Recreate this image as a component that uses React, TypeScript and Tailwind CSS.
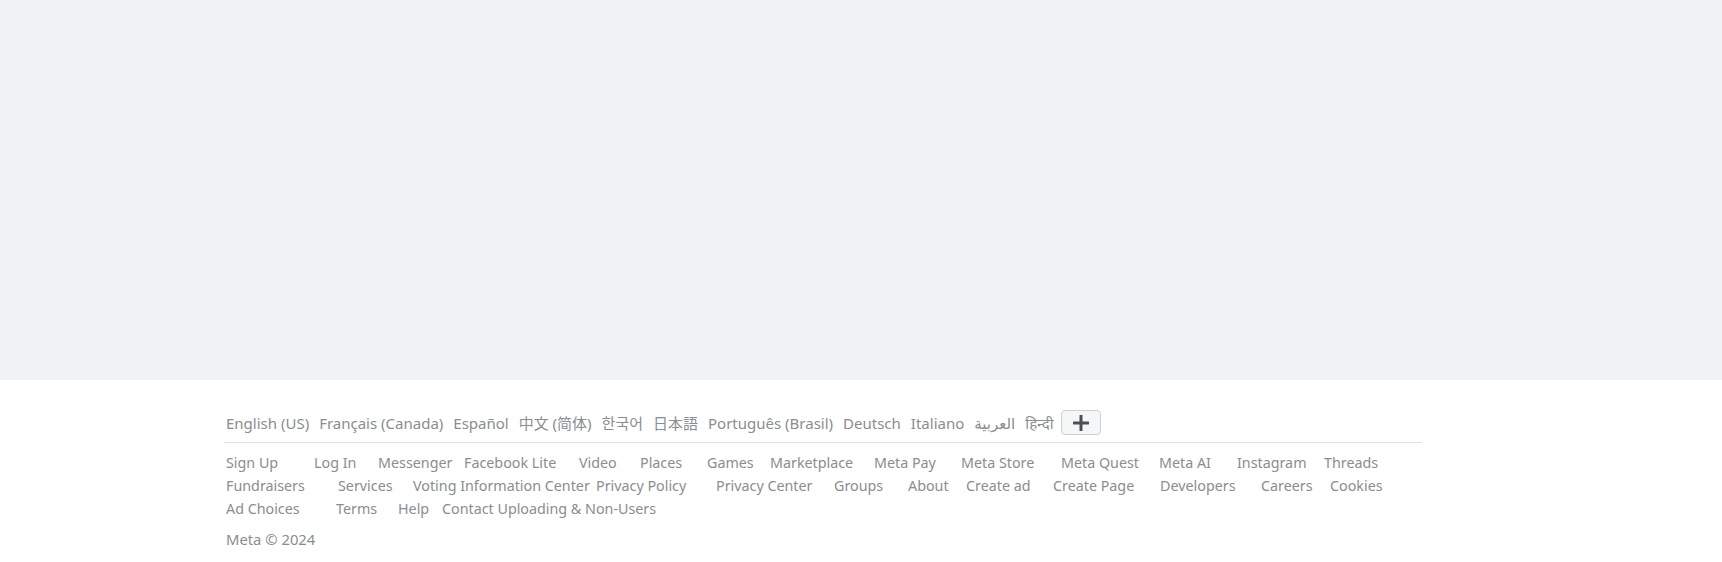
import React from "react";

const languages = [
  "English (US)",
  "Français (Canada)",
  "Español",
  "中文 (简体)",
  "한국어",
  "日本語",
  "Português (Brasil)",
  "Deutsch",
  "Italiano",
  "العربية",
  "हिन्दी",
];

// widths copied from the reference so the uneven spacing lines up
const linkRows: [string, string][][] = [
  [
    ["Sign Up", "w-[88px]"],
    ["Log In", "w-[64px]"],
    ["Messenger", "w-[86px]"],
    ["Facebook Lite", "w-[115px]"],
    ["Video", "w-[61px]"],
    ["Places", "w-[67px]"],
    ["Games", "w-[63px]"],
    ["Marketplace", "w-[104px]"],
    ["Meta Pay", "w-[87px]"],
    ["Meta Store", "w-[100px]"],
    ["Meta Quest", "w-[98px]"],
    ["Meta AI", "w-[78px]"],
    ["Instagram", "w-[87px]"],
    ["Threads", "w-auto"],
  ],
  [
    ["Fundraisers", "w-[112px]"],
    ["Services", "w-[75px]"],
    ["Voting Information Center", "w-[183px]"],
    ["Privacy Policy", "w-[120px]"],
    ["Privacy Center", "w-[118px]"],
    ["Groups", "w-[74px]"],
    ["About", "w-[58px]"],
    ["Create ad", "w-[87px]"],
    ["Create Page", "w-[107px]"],
    ["Developers", "w-[101px]"],
    ["Careers", "w-[69px]"],
    ["Cookies", "w-auto"],
  ],
  [
    ["Ad Choices", "w-[110px]"],
    ["Terms", "w-[62px]"],
    ["Help", "w-[44px]"],
    ["Contact Uploading & Non-Users", "w-auto"],
  ],
];

const PlusIcon = () => (
  <svg width="18" height="18" viewBox="0 0 18 18" fill="#4b4f56">
    <rect x="7.5" y="1" width="3" height="16" rx="0.5" />
    <rect x="1" y="7.5" width="16" height="3" rx="0.5" />
  </svg>
);

export default function App() {
  return (
    <div className="min-h-screen bg-white font-['Noto_Sans','Noto_Sans_Devanagari','Noto_Sans_CJK_KR','DejaVu_Sans',sans-serif] text-[#8a8d91]">
      <div className="h-[380px] bg-[#f0f2f5]" />
      <footer className="bg-white pb-[12px]">
        <div className="ml-[224px] w-[1198px] pt-[30px]">
          <ul className="flex h-[25px] items-center gap-[10px] pl-[2px] text-[15px] leading-[20px]">
            {languages.map((lang) => (
              <li key={lang}>
                <a href="#" className="hover:underline">
                  {lang}
                </a>
              </li>
            ))}
            <li>
              <button className="-ml-[3px] flex h-[25px] w-[40px] items-center justify-center rounded-[4px] border border-[#ccd0d5] bg-[#f5f6f7]">
                <PlusIcon />
              </button>
            </li>
          </ul>
          <div className="mt-[7px] h-px bg-[#dddfe2]" />
          <div className="mt-[8px] pl-[2px] text-[14.3px] leading-[23px]">
            {linkRows.map((row, i) => (
              <ul key={i} className="flex">
                {row.map(([label, width]) => (
                  <li key={label} className={`${width} shrink-0 whitespace-nowrap`}>
                    <a href="#" className="hover:underline">
                      {label}
                    </a>
                  </li>
                ))}
              </ul>
            ))}
          </div>
          <div className="mt-[9px] pl-[2px] text-[14.8px] leading-[20px]">Meta © 2024</div>
        </div>
      </footer>
    </div>
  );
}
